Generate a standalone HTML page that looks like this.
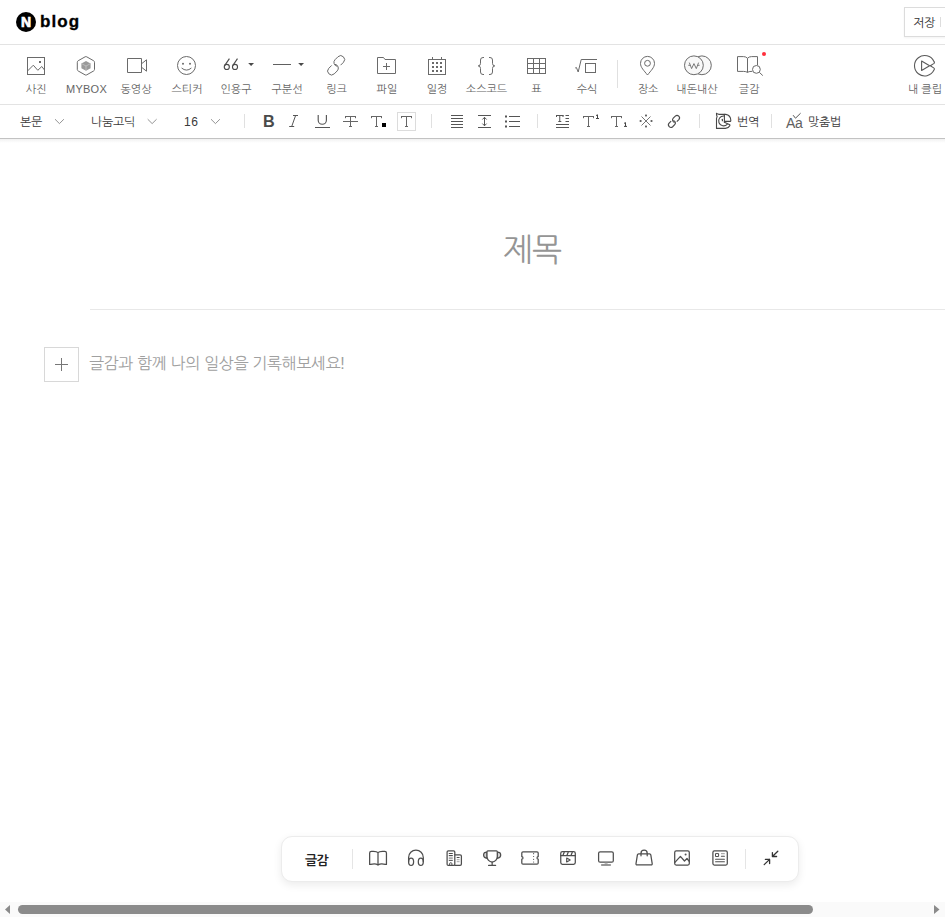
<!DOCTYPE html>
<html lang="ko">
<head>
<meta charset="utf-8">
<title>blog editor</title>
<style>
*{box-sizing:border-box;margin:0;padding:0}
html,body{width:945px;height:917px;overflow:hidden;background:#fff}
body{position:relative;font-family:"Liberation Sans","NanumGothic","Noto Sans CJK KR",sans-serif;color:#666;-webkit-font-smoothing:antialiased}
.abs{position:absolute}
svg{position:absolute;overflow:visible}
.hl{position:absolute;left:0;width:945px;height:1px}
/* header */
#hdr-line{top:44px;background:#e3e3e3}
#logoN{left:16px;top:12px;width:20px;height:20px;border-radius:50%;background:#000}
#logoN span{position:absolute;left:0;top:0;width:20px;height:20px;line-height:20px;text-align:center;color:#fff;font-weight:bold;font-size:14px;-webkit-text-stroke:0.7px #fff}
#logoT{left:40px;top:10px;height:24px;line-height:24px;font-size:17px;font-weight:bold;color:#000;letter-spacing:1.1px;-webkit-text-stroke:0.3px #000}
#save{left:904px;top:7px;width:60px;height:30px;border:1px solid #dcdcdc;background:#fff;box-shadow:0 1px 2px rgba(0,0,0,.05)}
#save span{position:absolute;left:8px;top:8px;font-size:12px;line-height:14px;color:#333;white-space:nowrap}
#save i{position:absolute;left:35px;top:9px;width:1px;height:10px;background:#ddd}
/* toolbar 1 */
#tb1-line{top:104px;background:#e3e3e3}
.lb{position:absolute;top:82px;width:70px;margin-left:-34px;text-align:center;font-size:11px;line-height:14px;color:#666;white-space:nowrap}
.vsep{position:absolute;width:1px;background:#e0e0e0}
/* toolbar 2 */
#tb2-line{top:138px;background:#c2c2c2}
#tb2-sh{top:139px;height:4px;background:linear-gradient(#f1f1f1,#fff)}
.t2{position:absolute;top:115px;font-size:12px;line-height:14px;color:#3a3a3a;white-space:nowrap;letter-spacing:-0.25px}
/* editor */
#title{left:432px;top:229px;width:200px;text-align:center;font-size:32px;line-height:42px;color:#959595;white-space:nowrap;letter-spacing:-1px}
#title-line{left:90px;top:309px;width:855px;height:1px;background:#e8e8e8}
#plus{left:44px;top:347px;width:35px;height:35px;border:1px solid #d8d8d8;background:#fff}
#ph{left:89px;top:353px;font-size:16px;line-height:22px;color:#a0a0a0;white-space:nowrap;letter-spacing:-0.36px}
/* floating */
#flt{left:281px;top:836px;width:518px;height:46px;border:1px solid #ececec;border-radius:11px;background:#fff;box-shadow:0 3px 9px rgba(0,0,0,.08)}
#flt-t{left:305px;top:853px;font-size:13px;line-height:16px;font-weight:bold;color:#222;white-space:nowrap;letter-spacing:-0.6px}
/* scrollbar */
#sb{left:0;top:902px;width:945px;height:15px;background:#fafafa}
#sb-th{left:18px;top:905px;width:795px;height:9px;border-radius:5px;background:#8b8b8b}
</style>
</head>
<body>
<!-- header -->
<div class="abs" id="logoN"><span>N</span></div>
<div class="abs" id="logoT">blog</div>
<div class="abs" id="save"><span>저장</span><i></i></div>
<div class="hl" id="hdr-line"></div>

<!-- toolbar 1 labels -->
<div class="lb" style="left:35px">사진</div>
<div class="lb" style="left:85.5px;letter-spacing:0.25px">MYBOX</div>
<div class="lb" style="left:135px">동영상</div>
<div class="lb" style="left:186px">스티커</div>
<div class="lb" style="left:235px">인용구</div>
<div class="lb" style="left:286px">구분선</div>
<div class="lb" style="left:335.5px">링크</div>
<div class="lb" style="left:386px">파일</div>
<div class="lb" style="left:436px">일정</div>
<div class="lb" style="left:485.5px">소스코드</div>
<div class="lb" style="left:535.5px">표</div>
<div class="lb" style="left:586px">수식</div>
<div class="lb" style="left:647px">장소</div>
<div class="lb" style="left:696px">내돈내산</div>
<div class="lb" style="left:748px">글감</div>
<div class="lb" style="left:924px">내 클립</div>
<div class="vsep" style="left:617px;top:60px;height:28px"></div>
<div class="hl" id="tb1-line"></div>
<!--I1S--><svg id="ic1" style="left:0;top:0" width="945" height="140" viewBox="0 0 945 140" fill="none" stroke="#6a6a6a" stroke-width="1">
<!-- photo -->
<rect x="27.5" y="57.5" width="17" height="17"/>
<path d="M27.5 71 L33.3 65.2 L37.8 70.3 L41.8 66.5 L44.5 70"/>
<rect x="39" y="61" width="2" height="2" fill="#6a6a6a" stroke="none"/>
<!-- mybox -->
<path d="M85.05 56.85 Q85.9 56.35 86.75 56.85 L93.65 60.75 Q94.5 61.25 94.5 62.25 L94.5 69.45 Q94.5 70.45 93.65 70.95 L86.75 74.85 Q85.9 75.35 85.05 74.85 L78.15 70.95 Q77.3 70.45 77.3 69.45 L77.3 62.25 Q77.3 61.25 78.15 60.75 Z"/>
<path d="M86 61 L90.6 63.5 L90.6 68.3 L86 70.8 L81.4 68.3 L81.4 63.5 Z" fill="#9a9a9a" stroke="none"/>
<path d="M81.4 63.5 L86 66 L90.6 63.5 M86 66 L86 70.8" stroke="#c4c4c4" stroke-width="0.8"/>
<!-- video -->
<path d="M127.5 58.5 H141.5 V72.5 H127.5 Z"/>
<path d="M141.5 63.8 L146.5 59.8 V71.2 L141.5 67.2"/>
<!-- sticker -->
<circle cx="186.5" cy="65.5" r="9"/>
<circle cx="183" cy="63.8" r="1" fill="#6a6a6a" stroke="none"/>
<circle cx="190" cy="63.8" r="1" fill="#6a6a6a" stroke="none"/>
<path d="M181.6 68 Q186.5 72.2 191.4 68"/>
<!-- quote -->
<g stroke="#4a4a4a" stroke-width="1.1"><circle cx="226.8" cy="66.9" r="2.55"/>
<path d="M229.4 58.6 L224.8 65.4"/>
<circle cx="235" cy="66.9" r="2.55"/>
<path d="M237.5 58.6 L232.9 65.4"/></g>
<path d="M248.2 63.1 H254 L251.1 66.1 Z" fill="#4a4a4a" stroke="none"/>
<!-- divider -->
<path d="M273 64.5 H291" stroke="#606060"/>
<path d="M298.2 63.1 H304 L301.1 66.1 Z" fill="#4a4a4a" stroke="none"/>
<!-- link -->
<path d="M340.57 65.19 L343.54 62.22 A3.9 3.9 0 0 0 338.03 56.71 L335.06 59.68 A3.9 3.9 0 0 0 337.27 66.30"/>
<path d="M331.68 65.41 L328.71 68.38 A3.9 3.9 0 0 0 334.22 73.89 L337.19 70.92 A3.9 3.9 0 0 0 334.98 64.30"/>
<!-- file -->
<path d="M377.5 57.5 H383.5 L385 59.5 H395.5 V73.5 H377.5 Z"/>
<path d="M383 66.5 H390 M386.5 63 V70"/>
<!-- calendar -->
<rect x="428.5" y="59.5" width="17" height="15"/>
<path d="M432.5 57 V59.5 M441.5 57 V59.5"/>
<g fill="#6a6a6a" stroke="none">
<rect x="432" y="62" width="2" height="2"/><rect x="436" y="62" width="2" height="2"/><rect x="440" y="62" width="2" height="2"/>
<rect x="432" y="66" width="2" height="2"/><rect x="436" y="66" width="2" height="2"/><rect x="440" y="66" width="2" height="2"/>
<rect x="432" y="70" width="2" height="2"/><rect x="436" y="70" width="2" height="2"/><rect x="440" y="70" width="2" height="2"/>
</g>
<!-- code -->
<path d="M484 57.5 H483 Q480.5 57.5 480.5 60 V63.3 Q480.5 65.9 478.2 65.9 Q480.5 65.9 480.5 68.5 V72 Q480.5 74.5 483 74.5 H484"/>
<path d="M489 57.5 H490 Q492.5 57.5 492.5 60 V63.3 Q492.5 65.9 494.8 65.9 Q492.5 65.9 492.5 68.5 V72 Q492.5 74.5 490 74.5 H489"/>
<!-- table -->
<rect x="527.5" y="58.5" width="18" height="15"/>
<path d="M533.5 58.5 V73.5 M539.5 58.5 V73.5 M527.5 63.5 H545.5 M527.5 68.5 H545.5"/>
<!-- formula -->
<path d="M575.2 68 L576.4 67.5 L578.2 72 L581.2 59.5 H597"/>
<rect x="585.5" y="63.5" width="10" height="9"/>
<!-- place -->
<path d="M647.5 75 C644 70.6 640.5 67.4 640.5 63.4 A7 7 0 0 1 654.5 63.4 C654.5 67.4 651 70.6 647.5 75 Z"/>
<circle cx="647.5" cy="63.3" r="2.9"/>
<!-- naedon -->
<circle cx="701.9" cy="65.3" r="9.4" fill="#f8f8f8"/>
<circle cx="693.9" cy="65.3" r="9.4" fill="#f8f8f8"/>
<path d="M689.3 62.6 L691.6 68.6 L693.95 63.6 L696.3 68.6 L698.6 62.6 M688.3 65.3 H690.2 M697.7 65.3 H699.6" stroke-width="0.9" stroke-linejoin="round"/>
<!-- geulgam -->
<path d="M747.5 58.3 V72.4 M747.5 58.3 Q746 56.6 743.5 56.6 H737.5 V71.4 H743.5 Q746 71.4 747.5 72.4 M747.5 58.3 Q749 56.6 751.5 56.6 H757.5 V65.2 M747.5 72.4 Q749 71.4 751 71.4 H752.3"/>
<circle cx="756.4" cy="69.4" r="3.9"/>
<path d="M759.4 72.4 L762.8 75.6"/>
<circle cx="764" cy="54" r="2" fill="#ff2f3b" stroke="none"/>
<!-- clip -->
<path stroke="#5a5a5a" stroke-width="1.1" d="M930.3 65.75 L933.7 63.6 Q935 62.7 933.94 61.44 A10.2 10.2 0 1 0 933.94 70.06 Q935 68.8 933.7 67.9 Z" stroke-linejoin="round"/>
<path stroke="#5a5a5a" stroke-width="1.1" d="M921.6 61.1 L929.6 65.75 L921.6 70.4 Z" stroke-linejoin="round"/>
</svg>
<!--I1E-->

<!-- toolbar 2 -->
<div class="t2" style="left:20px">본문</div>
<div class="t2" style="left:91px">나눔고딕</div>
<div class="t2" style="left:184px;letter-spacing:0.7px">16</div>
<div class="abs" id="tB" style="left:263px;top:112px;font-size:16.2px;line-height:18px;font-weight:bold;color:#4a4a4a">B</div>
<div class="abs" id="tAa" style="left:786px;top:115px;font-size:14px;line-height:16px;color:#606060;white-space:nowrap;letter-spacing:-0.3px">Aa</div>
<div class="t2" style="left:737px">번역</div>
<div class="t2" style="left:808px">맞춤법</div>
<div class="vsep" style="left:244px;top:114px;height:14px"></div>
<div class="vsep" style="left:431px;top:114px;height:14px"></div>
<div class="vsep" style="left:537px;top:114px;height:14px"></div>
<div class="vsep" style="left:699px;top:114px;height:14px"></div>
<div class="vsep" style="left:771px;top:114px;height:14px"></div>
<div class="hl" id="tb2-line"></div>
<div class="hl" id="tb2-sh"></div>
<!--I2S--><svg id="ic2" style="left:0;top:0" width="945" height="140" viewBox="0 0 945 140" fill="none" stroke="#666" stroke-width="1">
<!-- chevrons -->
<g stroke="#777" stroke-width="0.8">
<path d="M55 119.2 L59.45 123.6 L63.9 119.2"/>
<path d="M147.7 119.2 L152.15 123.6 L156.6 119.2"/>
<path d="M211 119.2 L215.45 123.6 L219.9 119.2"/>
</g>
<!-- italic -->
<path d="M293 115.5 H298 M289.2 126.5 H294.2 M295.6 115.5 L291.7 126.5" stroke="#555"/>
<!-- underline -->
<path d="M318.2 115 V120.2 A4.1 4.1 0 0 0 326.4 120.2 V115 M315 127.5 H330" stroke="#555" stroke-width="1.15"/>
<!-- strike -->
<path d="M345.5 118.2 V116 M355.5 118.2 V116 M345 116.5 H356 M350.5 116.5 V126.5 M349 126.5 H352 M343 121.5 H358"/>
<!-- T color -->
<path d="M371.5 118.2 V116 M381.5 118.2 V116 M371 116.5 H382 M376.5 116.5 V126.5 M375 126.5 H378"/>
<rect x="382" y="123" width="4" height="4" fill="#000" stroke="none"/>
<!-- T boxed -->
<rect x="397.5" y="112.5" width="18" height="18" stroke="#dcdcdc"/>
<path d="M401.5 118.2 V116 M411.5 118.2 V116 M401 116.5 H412 M406.5 116.5 V126.5 M405 126.5 H408"/>
<!-- align -->
<path d="M451 115.5 H463 M451 118.5 H463 M451 121.5 H463 M451 124.5 H463 M451 127.5 H463" stroke="#555"/>
<!-- line height -->
<path d="M478 115.5 H491 M478 127.5 H491 M484.5 117.3 V125.8 M482.4 119.5 L484.5 117.3 L486.6 119.5 M482.4 123.6 L484.5 125.8 L486.6 123.6" stroke="#555"/>
<!-- list -->
<path d="M509 116.5 H520 M509 121.5 H520 M509 126.5 H520" stroke="#555"/>
<g fill="#555" stroke="none"><rect x="505" y="115.5" width="2" height="2"/><rect x="505" y="120.5" width="2" height="2"/><rect x="505" y="125.5" width="2" height="2"/></g>
<!-- T lines -->
<path d="M556.5 117 V115 M563 117 V115 M556 115.5 H563.5 M559.75 115.5 V121.5 M558.3 121.5 H561.3 M565.5 115.5 H569 M565.5 118.5 H569 M565.5 121.5 H569 M556 124.5 H569 M556 127.5 H569" stroke="#555"/>
<!-- T sup -->
<path d="M583.5 118.2 V116 M593.5 118.2 V116 M583 116.5 H594 M588.5 116.5 V126.5 M587 126.5 H590"/>
<path d="M596 115.6 L597.5 114.8 V118.5 M596 118.5 H599" stroke="#444"/>
<!-- T sub -->
<path d="M611.5 118.2 V116 M621.5 118.2 V116 M611 116.5 H622 M616.5 116.5 V126.5 M615 126.5 H618"/>
<path d="M624 123.4 L625.5 122.6 V126.4 M624 126.4 H627" stroke="#444"/>
<!-- special -->
<path d="M641.5 116.5 L650.5 125.5 M650.5 116.5 L641.5 125.5" stroke-width="0.9"/>
<g fill="#555" stroke="none"><rect x="645.1" y="114.6" width="1.8" height="1.8"/><rect x="645.1" y="125.6" width="1.8" height="1.8"/><rect x="639.7" y="120.1" width="1.8" height="1.8"/><rect x="650.6" y="120.1" width="1.8" height="1.8"/></g>
<!-- link small -->
<g stroke="#4a4a4a" stroke-width="1.15"><path d="M676.79 121.64 L678.84 119.59 A2.5 2.5 0 0 0 675.31 116.06 L673.26 118.11 A2.5 2.5 0 0 0 674.68 122.35"/><path d="M671.16 121.16 L669.11 123.21 A2.5 2.5 0 0 0 672.64 126.74 L674.69 124.69 A2.5 2.5 0 0 0 673.27 120.45"/></g>
<!-- papago -->
<g stroke="#484848" stroke-width="1.1" stroke-linejoin="round" stroke-linecap="round">
<path d="M716.5 113.4 L716.6 115.2 Q717.7 116.7 716.5 118.3 V128.4 H725.4 Q728.7 128 729.8 125.7 Q730.2 124.9 729.3 124.5 L724.4 122.2"/>
<path d="M716.5 113.4 Q717.6 114.3 719.2 114.35 H725.7 A6.1 6.1 0 0 1 730.8 120.2 Q730.9 121.4 730 121.4 H724.4"/>
<path d="M724.4 114.35 V122.2"/>
<path d="M723.9 116 A4.95 4.95 0 1 0 727.2 124.3"/>
<path d="M722.4 119.3 V120.7" stroke-width="1.2"/>
</g>
<!-- check -->
<path d="M793.1 115.2 L795.5 118.2 L800.6 113.2" stroke="#555"/>
</svg>
<!--I2E-->

<!-- editor -->
<div class="abs" id="title">제목</div>
<div class="abs" id="title-line"></div>
<div class="abs" id="plus"></div>
<div class="abs" id="ph">글감과 함께 나의 일상을 기록해보세요!</div>
<svg style="left:44px;top:347px" width="35" height="35" viewBox="0 0 35 35"><path d="M11 17.5 H24 M17.5 11 V24" stroke="#777" stroke-width="1" fill="none"/></svg>

<!-- floating -->
<div class="abs" id="flt"></div>
<div class="abs" id="flt-t">글감</div>
<div class="vsep" style="left:352px;top:849px;height:20px;background:#e5e5e5"></div>
<div class="vsep" style="left:745px;top:849px;height:20px;background:#e5e5e5"></div>
<!--I3S--><svg id="ic3" style="left:0;top:0" width="945" height="917" viewBox="0 0 945 917" fill="none" stroke="#4e4e4e" stroke-width="1.25" stroke-linecap="round" stroke-linejoin="round">
<!-- book -->
<path stroke="#4c4c4c" d="M378 852.6 C377 851.4 375 851.3 373.5 851.3 H371.4 Q369.65 851.3 369.65 853 V864.4 H370.6 C374 863.3 376.5 863.8 378 865 C379.5 863.8 382 863.3 385.4 864.4 H386.45 V853 Q386.45 851.3 384.7 851.3 H382.5 C381 851.3 379 851.4 378 852.6 V865"/>
<!-- headphones -->
<path d="M408.6 861.7 V857.5 A7.35 7.35 0 0 1 423.3 857.5 V861.7"/>
<ellipse cx="411.1" cy="861.7" rx="2.5" ry="3.7"/>
<ellipse cx="420.8" cy="861.7" rx="2.5" ry="3.7"/>
<!-- building -->
<rect x="447.1" y="850.9" width="7.7" height="14.5" rx="1.2"/>
<path d="M454.8 854.8 H460.1 Q461.4 854.8 461.4 856.1 V864.1 Q461.4 865.4 460.1 865.4 H454.8"/>
<path d="M449.2 853.5 H452.4 M449.2 855.5 H452.4 M449.2 860.4 H452.4 M457.1 857.5 H459.2" stroke-width="1"/>
<path d="M449.2 857.2 H452.4 M449.2 858.6 H452.4 M457.1 859.7 H459.2 M457.1 861.7 H459.2" stroke-width="0.9" stroke="#999"/>
<path d="M449.6 865.2 V863.7 Q449.6 862.7 450.75 862.7 Q451.9 862.7 451.9 863.7 V865.2" stroke-width="1"/>
<!-- trophy -->
<path d="M487 852.2 C484.6 852.2 483.6 853.4 483.6 855 C483.6 856.8 485 858 487.2 858.3 Z" fill="#d4d4d4"/>
<path d="M497.3 852.2 C499.7 852.2 500.7 853.4 500.7 855 C500.7 856.8 499.3 858 497.1 858.3 Z" fill="#d4d4d4"/>
<path d="M487.9 850.8 H496.4 Q497.3 850.8 497.3 851.7 V856.6 A5.15 5.4 0 0 1 487 856.6 V851.7 Q487 850.8 487.9 850.8 Z" fill="#fff"/>
<path d="M492.15 862.1 V865.4 M488.6 865.4 H495.6"/>
<!-- ticket -->
<path d="M523 851.8 H537 Q538.2 851.8 538.2 853 V856.7 A1.2 1.2 0 0 0 538.2 859.1 V862.9 Q538.2 864.1 537 864.1 H523 Q521.8 864.1 521.8 862.9 V859.1 A1.2 1.2 0 0 0 521.8 856.7 V853 Q521.8 851.8 523 851.8 Z"/>
<g fill="#555" stroke="none"><circle cx="533.6" cy="853.7" r="0.6"/><circle cx="533.6" cy="856.5" r="0.6"/><circle cx="533.6" cy="859.3" r="0.6"/><circle cx="533.6" cy="862" r="0.6"/></g>
<!-- clapper -->
<rect x="560.75" y="851.6" width="14.55" height="12.65" rx="1.7"/>
<path d="M560.75 855.5 H575.3"/>
<path d="M563 855.3 L564.3 852 M567 855.3 L568.3 852 M571.1 855.3 L572.4 852" stroke-width="1.25" stroke-linecap="butt"/>
<path d="M566.7 858 L570.2 860 L566.7 862 Z" stroke-width="1.15"/>
<!-- monitor -->
<rect x="598.6" y="851.8" width="14.7" height="10.4" rx="1.5"/>
<path d="M604.6 863.6 H607.6" stroke="#bbb" stroke-width="1.6" stroke-linecap="butt"/>
<path d="M601.6 865 H610.4" stroke-width="1.3" stroke="#777"/>
<!-- bag -->
<path d="M638.6 853.9 H649.6 Q650.6 853.9 650.8 854.9 L652.2 863.6 Q652.4 864.9 651.1 864.9 H637.1 Q635.8 864.9 636 863.6 L637.4 854.9 Q637.6 853.9 638.6 853.9 Z"/>
<path d="M641 855.8 V853.2 A3.1 3.1 0 0 1 647.2 853.2 V855.8"/>
<!-- image -->
<rect x="674.7" y="850.9" width="14.6" height="14.2" rx="1.5"/>
<path d="M674.9 862.4 L680.4 856.4 L684.5 861 L687 858.5 L689.2 861.3"/>
<circle cx="685.6" cy="854.6" r="1" fill="#555" stroke="none"/>
<!-- news -->
<rect x="712.9" y="850.9" width="14.4" height="14.2" rx="1.5"/>
<rect x="715.9" y="853.6" width="2.7" height="2.9" stroke-width="1"/>
<path d="M721.4 856.3 H724.4 M715.6 859.3 H724.4 M715.6 861.8 H724.4" stroke-width="1.1"/>
<path d="M721.4 853.7 H724.4" stroke="#999" stroke-width="1"/>
<!-- collapse -->
<g stroke="#333" stroke-width="1.3"><path d="M777.8 851.3 L772.4 856.5 M772.4 852.6 V856.5 H776.6"/>
<path d="M764.2 864.6 L769.6 859.4 M765.4 859.4 H769.6 V863.5"/></g>
</svg>
<!--I3E-->

<!-- scrollbar -->
<div class="abs" id="sb"></div>
<div class="abs" id="sb-th"></div>
<svg style="left:0;top:902px" width="945" height="15" viewBox="0 0 945 15"><path d="M5 7.5 L10 3 L10 12 Z" fill="#8b8b8b"/><path d="M939.5 7.5 L934 3 L934 12 Z" fill="#8b8b8b"/></svg>
</body>
</html>
